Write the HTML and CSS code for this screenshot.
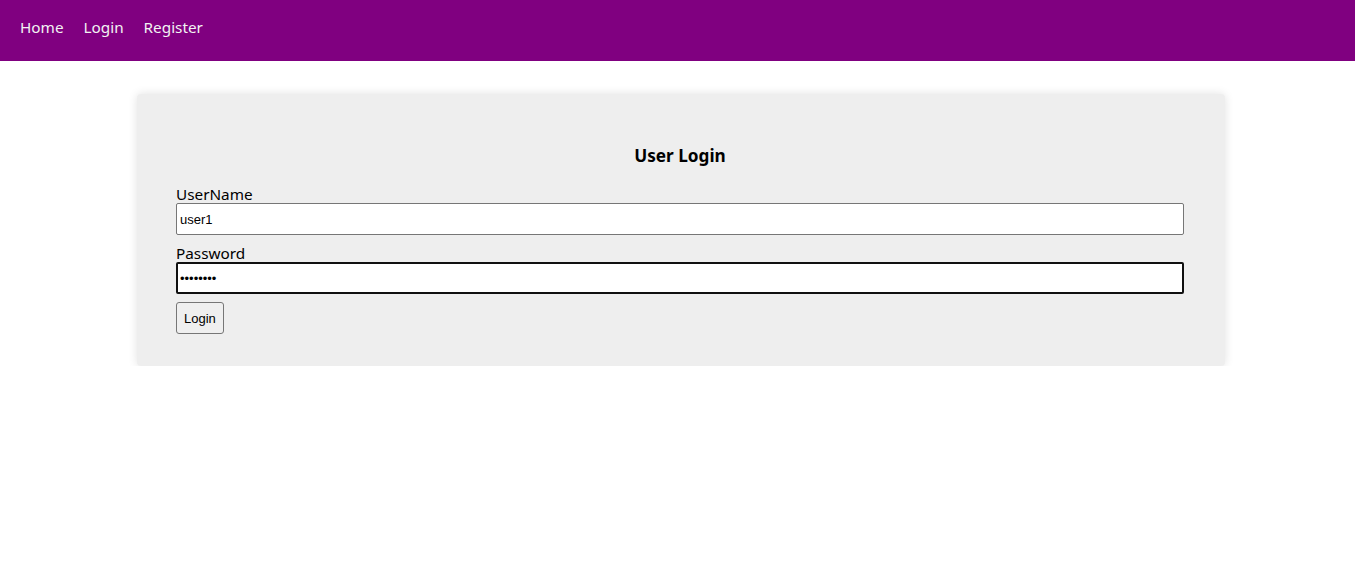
FILE: index.html
```html
<!DOCTYPE html>
<html>
<head>
<meta charset="utf-8">
<link rel="stylesheet" href="styles.css">
</head>
<body>
<nav class="topnav">
  <a href="#">Home</a>
  <a href="#">Login</a>
  <a href="#">Register</a>
</nav>
<main class="card">
  <h3 class="title">User Login</h3>
  <label class="label">UserName</label>
  <input class="field" type="text" value="user1">
  <label class="label">Password</label>
  <input class="field field-focus" type="password" value="password">
  <button class="btn">Login</button>
</main>
</body>
</html>
```
FILE: styles.css
```css
html, body {
  margin: 0;
  padding: 0;
  background: #fff;
  font-family: "Noto Sans", "Open Sans", sans-serif;
  color: #000;
}
.topnav {
  height: 61px;
  background: #800080;
  display: flex;
  align-items: center;
  gap: 20px;
  padding: 0 20px;
  box-sizing: border-box;
}
.topnav a {
  color: #f2f2f2;
  text-decoration: none;
  font-size: 15.3px;
  line-height: 22px;
  margin-top: -7px;
}
.card {
  width: 1088px;
  box-sizing: border-box;
  margin: 33px 0 0 137px;
  background: #eeeeee;
  border-radius: 4px;
  box-shadow: 0 0 10px rgba(0, 0, 0, 0.12);
  padding: 49px 41px 32px 39px;
  display: flex;
  flex-direction: column;
  align-items: flex-start;
}
.title {
  align-self: stretch;
  text-align: center;
  font-size: 17.2px;
  font-weight: bold;
  line-height: 26px;
  margin: 0 0 16px 0;
}
.label {
  display: block;
  font-size: 15.3px;
  line-height: 18px;
}
.field {
  align-self: stretch;
  height: 32px;
  box-sizing: border-box;
  margin: 0 0 9px 0;
  border: 1px solid #767676;
  border-radius: 2px;
  padding: 1px 3px;
  font-family: "Liberation Sans", Arial, sans-serif;
  font-size: 13px;
  background: #fff;
  outline: none;
}
.field-focus {
  border: 2px solid #101010;
  padding: 0 2px;
  margin-bottom: 8px;
}
.btn {
  height: 32px;
  padding: 1px 7px;
  font-family: "Liberation Sans", Arial, sans-serif;
  font-size: 13px;
  background: #efefef;
  border: 1px solid #767676;
  border-radius: 3px;
  color: #000;
}
```
